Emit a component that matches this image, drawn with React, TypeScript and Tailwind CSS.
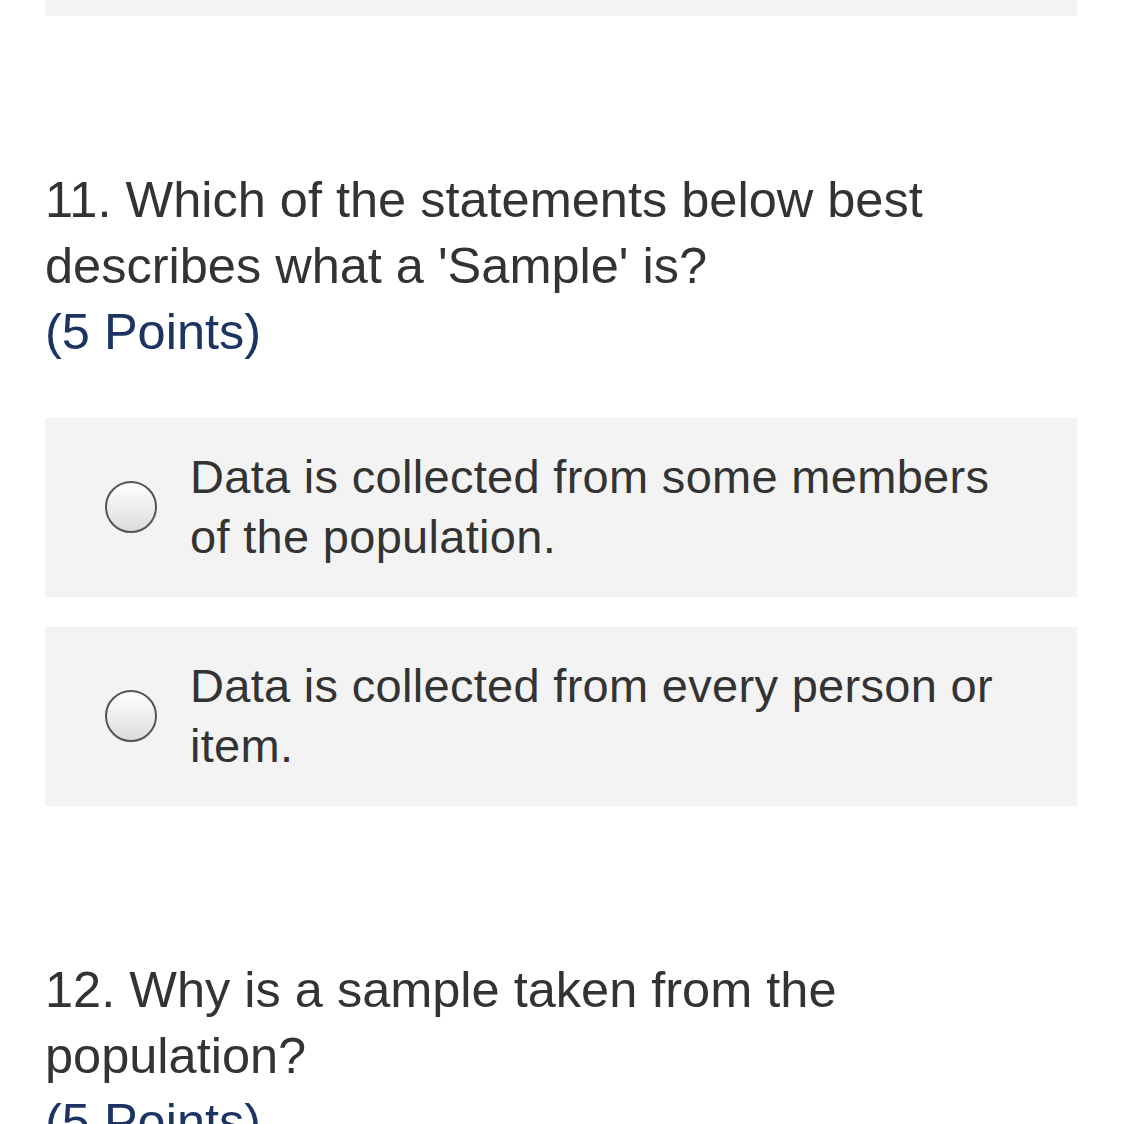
const options11 = [
  'Data is collected from some members of the population.',
  'Data is collected from every person or item.',
];

function Radio() {
  return (
    <span className="shrink-0 w-[52px] h-[52px] rounded-full border-2 border-[#555555] bg-gradient-to-b from-white to-[#dcdcdc]" />
  );
}

function Question({ num, text }: { num: number; text: string }) {
  return (
    <div className="text-[50.5px] leading-[66px] text-[#333333]">
      <div>
        {num}. {text}
      </div>
      <div className="text-[#1b3461]">(5 Points)</div>
    </div>
  );
}

export default function App() {
  return (
    <div className="w-[1122px] min-h-[1124px] bg-white px-[45px] overflow-hidden" style={{ fontFamily: '"Liberation Sans", Arial, sans-serif' }}>
      <div className="h-[16px] bg-[#f3f3f3]" />

      <div className="mt-[151px] pr-[100px]">
        <Question num={11} text="Which of the statements below best describes what a 'Sample' is?" />
      </div>

      <div className="mt-[53px] flex flex-col gap-[30px]">
        {options11.map((o) => (
          <div key={o} className="bg-[#f3f3f3] flex items-center pl-[60px] pr-[60px] pt-[29px] pb-[30px]">
            <Radio />
            <div className="ml-[33px] text-[47px] tracking-[0.3px] leading-[60px] text-[#333333]">{o}</div>
          </div>
        ))}
      </div>

      <div className="mt-[151px] pr-[100px]">
        <Question num={12} text="Why is a sample taken from the population?" />
      </div>
    </div>
  );
}
